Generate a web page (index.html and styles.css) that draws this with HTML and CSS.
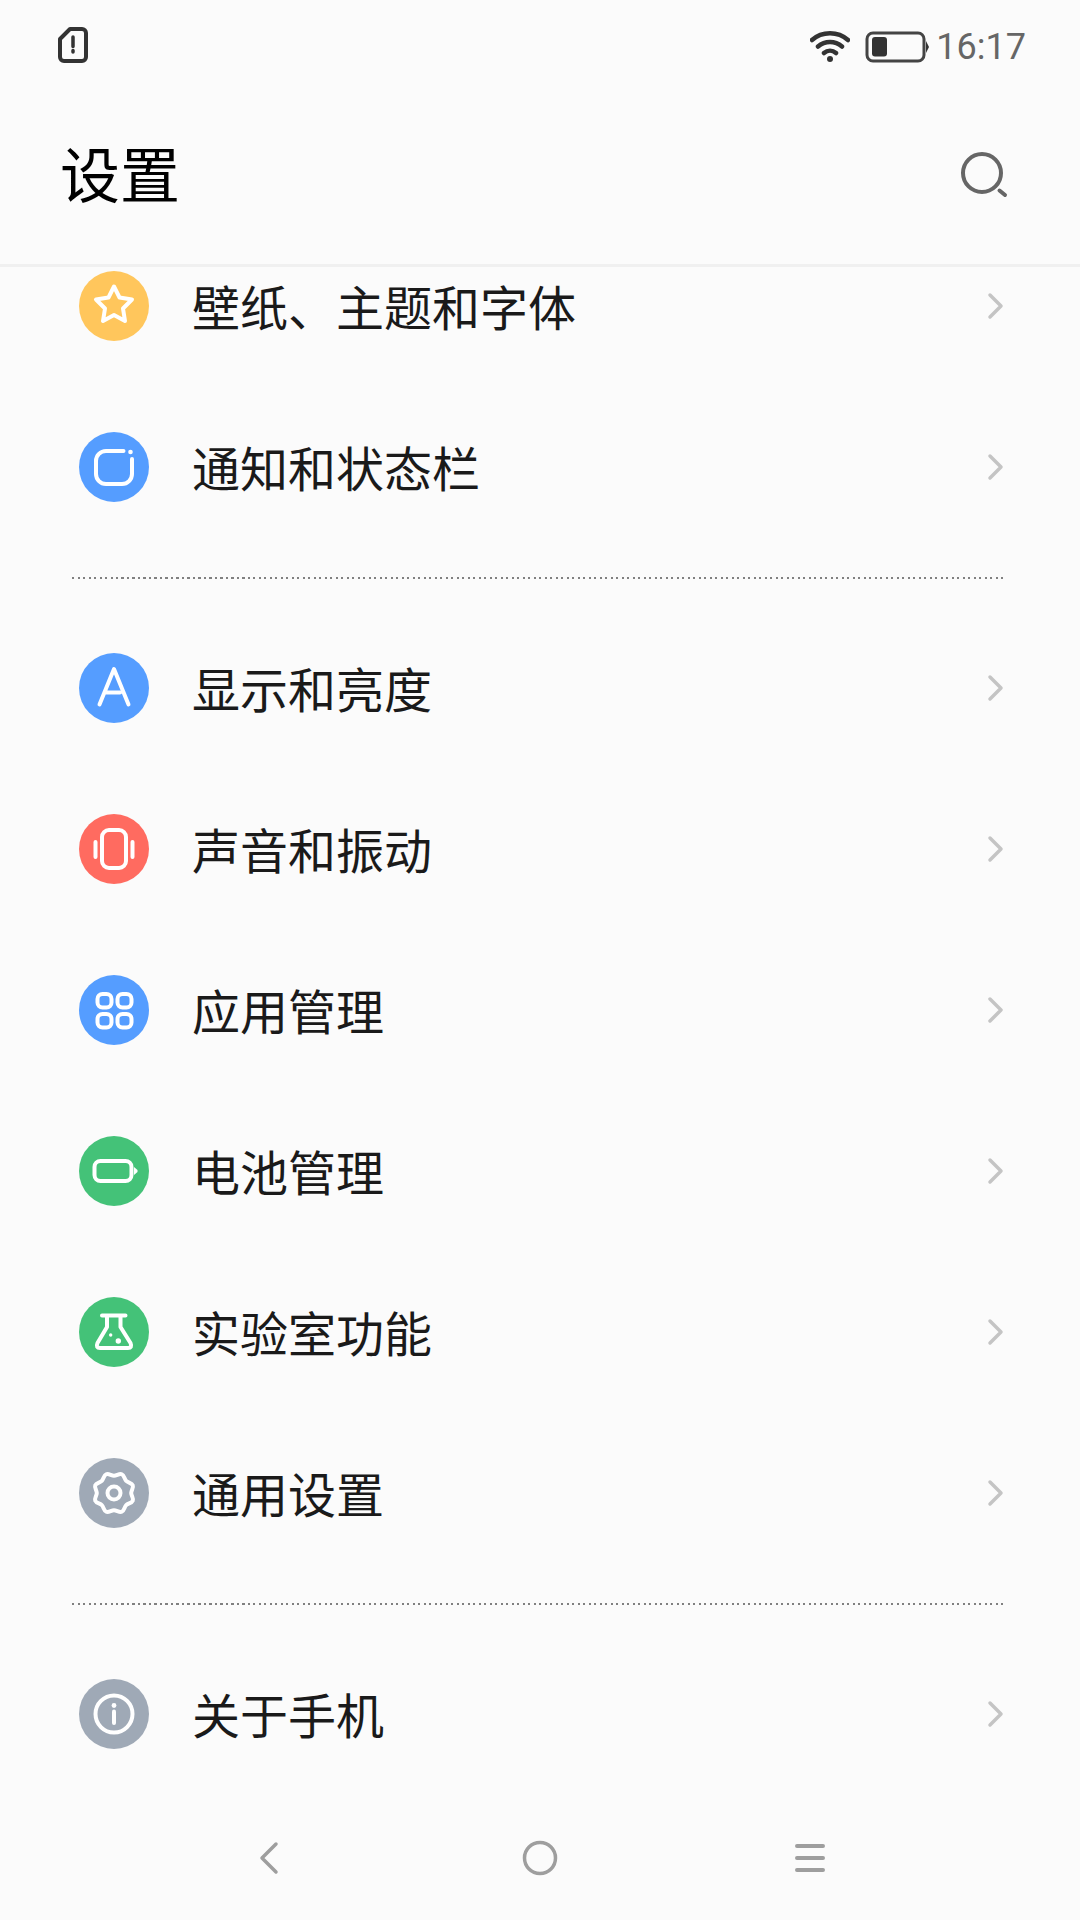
FILE: index.html
```html
<!DOCTYPE html>
<html lang="zh">
<head>
<meta charset="utf-8">
<title>设置</title>
<link rel="stylesheet" href="styles.css">
</head>
<body>
<div class="screen">
  <header class="top">
    <div class="status">
      <svg class="sim" viewBox="0 0 30 36"><path class="st-dark" d="M12 2H24a4 4 0 0 1 4 4V30a4 4 0 0 1-4 4H6a4 4 0 0 1-4-4V12Z"/><path class="st-mark" d="M15 10V19.500M15 23.500V25"/></svg>
      <div class="status-right">
        <svg class="wifi" viewBox="0 0 40 31"><path class="st-wifi" d="M2 9C12 0 28 0 38 9M8 15.500C15 9.500 25 9.500 32 15.500M14 22C17.500 19 22.500 19 26 22"/><circle class="fill-dark" cx="20" cy="28" r="3"/></svg>
        <svg class="batt" viewBox="0 0 64 32"><rect class="st-batt" x="2" y="2" width="57" height="28" rx="6"/><path class="fill-dark" d="M61 10l3 6-3 6z"/><rect class="fill-dark" x="7" y="6" width="15" height="19.500" rx="3"/></svg>
        <span class="time">16:17</span>
      </div>
    </div>
    <div class="titlebar">
      <h1 class="title">设置</h1>
      <svg class="search" viewBox="0 0 50 50"><circle class="st-search" cx="22" cy="21" r="19"/><path class="st-search" d="M39.500 38.500L45 43"/></svg>
    </div>
  </header>

  <main class="content">
    <div class="list">
      <section class="group">
        <div class="row">
          <svg class="ico" viewBox="0 0 70 70"><circle class="bg-yellow" cx="35" cy="35" r="35"/><path class="st-w" d="M35 15.500L40.500 26.500 53 28.500 44 37.500 46 50 35 44 24 50 26 37.500 17 28.500 29.500 26.500Z"/></svg>
          <span class="label">壁纸、主题和字体</span>
          <svg class="chev" viewBox="0 0 18 30"><path d="M3 4L14 15 3 26"/></svg>
        </div>
        <div class="row">
          <svg class="ico" viewBox="0 0 70 70"><circle class="bg-blue" cx="35" cy="35" r="35"/><path class="st-w" d="M44.500 19H27a10 10 0 0 0-10 10V42a10 10 0 0 0 10 10H43a10 10 0 0 0 10-10V27"/><circle class="fill-w" cx="51.500" cy="20" r="2.300"/></svg>
          <span class="label">通知和状态栏</span>
          <svg class="chev" viewBox="0 0 18 30"><path d="M3 4L14 15 3 26"/></svg>
        </div>
      </section>
      <div class="dots"></div>
      <section class="group">
        <div class="row">
          <svg class="ico" viewBox="0 0 70 70"><circle class="bg-blue" cx="35" cy="35" r="35"/><path class="st-w" d="M20.500 51.500L35 16 49.500 51.500M27 39.500H41"/></svg>
          <span class="label">显示和亮度</span>
          <svg class="chev" viewBox="0 0 18 30"><path d="M3 4L14 15 3 26"/></svg>
        </div>
        <div class="row">
          <svg class="ico" viewBox="0 0 70 70"><circle class="bg-red" cx="35" cy="35" r="35"/><rect class="st-w" x="23" y="16" width="24" height="38" rx="7"/><path class="st-w" d="M16.500 28V43M53.500 28V43"/></svg>
          <span class="label">声音和振动</span>
          <svg class="chev" viewBox="0 0 18 30"><path d="M3 4L14 15 3 26"/></svg>
        </div>
        <div class="row">
          <svg class="ico" viewBox="0 0 70 70"><circle class="bg-blue" cx="35" cy="35" r="35"/><rect class="st-w" x="18.500" y="19" width="14" height="13.500" rx="5"/><rect class="st-w" x="38.500" y="19" width="14" height="13.500" rx="5"/><rect class="st-w" x="18.500" y="39" width="14" height="13.500" rx="5"/><rect class="st-w" x="38.500" y="39" width="14" height="13.500" rx="5"/></svg>
          <span class="label">应用管理</span>
          <svg class="chev" viewBox="0 0 18 30"><path d="M3 4L14 15 3 26"/></svg>
        </div>
        <div class="row">
          <svg class="ico" viewBox="0 0 70 70"><circle class="bg-green" cx="35" cy="35" r="35"/><rect class="st-w" x="15.500" y="25" width="37" height="20" rx="6"/><path class="fill-w" d="M55 31L58.500 34V36L55 39Z"/></svg>
          <span class="label">电池管理</span>
          <svg class="chev" viewBox="0 0 18 30"><path d="M3 4L14 15 3 26"/></svg>
        </div>
        <div class="row">
          <svg class="ico" viewBox="0 0 70 70"><circle class="bg-green" cx="35" cy="35" r="35"/><path class="st-w" d="M23 18.500H46.500M28 18.500V30L18.500 46Q16.500 51 21 51H49Q53.500 51 51.500 46L41.500 30V18.500"/><circle class="fill-w" cx="31.700" cy="38" r="1.700"/><circle class="fill-w" cx="39.300" cy="44" r="2.700"/></svg>
          <span class="label">实验室功能</span>
          <svg class="chev" viewBox="0 0 18 30"><path d="M3 4L14 15 3 26"/></svg>
        </div>
        <div class="row">
          <svg class="ico" viewBox="0 0 70 70"><circle class="bg-gray" cx="35" cy="35" r="35"/><path class="st-w" d="M35 17.800C37.600 17.800 40.370 15.240 42.770 16.240S45.320 21 47.160 22.840S52.760 24.830 53.760 27.230S52.200 32.400 52.200 35S54.760 40.370 53.760 42.770S49 45.320 47.160 47.160S45.170 52.760 42.770 53.760S37.600 52.200 35 52.200S29.630 54.760 27.230 53.760S24.680 49 22.840 47.160S17.240 45.170 16.240 42.770S17.800 37.600 17.800 35S15.240 29.630 16.240 27.230S21 24.680 22.840 22.840S24.830 17.240 27.230 16.240S32.400 17.800 35 17.800Z"/><circle class="st-w" cx="35" cy="35" r="6.500"/></svg>
          <span class="label">通用设置</span>
          <svg class="chev" viewBox="0 0 18 30"><path d="M3 4L14 15 3 26"/></svg>
        </div>
      </section>
      <div class="dots"></div>
      <section class="group">
        <div class="row">
          <svg class="ico" viewBox="0 0 70 70"><circle class="bg-gray" cx="35" cy="35" r="35"/><circle class="st-w" cx="35" cy="35" r="18.500"/><path class="st-w" d="M35 32.500V44"/><circle class="fill-w" cx="35" cy="26.500" r="2.400"/></svg>
          <span class="label">关于手机</span>
          <svg class="chev" viewBox="0 0 18 30"><path d="M3 4L14 15 3 26"/></svg>
        </div>
      </section>
    </div>
  </main>

  <nav class="navbar">
    <svg class="nav-back" viewBox="0 0 20 34"><path class="st-nav" d="M17 3L3 17 17 31" /></svg>
    <svg class="nav-home" viewBox="0 0 36 36"><circle class="st-nav" cx="18" cy="18" r="15.500"/></svg>
    <svg class="nav-menu" viewBox="0 0 30 28"><path class="st-nav-m" d="M2 2H28M2 14H28M2 26H28"/></svg>
  </nav>
</div>
</body>
</html>
```
FILE: styles.css
```css
* { box-sizing: border-box; }
html, body { margin: 0; padding: 0; }
body { background: #fbfbfb; font-family: "Noto Sans CJK SC", "Noto Sans", sans-serif; }
.screen { width: 1080px; height: 1920px; display: flex; flex-direction: column; overflow: hidden; background: #fbfbfb; }

.top { height: 267px; flex: none; border-bottom: 3px solid #f0f0f0; position: relative; z-index: 1; background: #fbfbfb; }
.status { height: 90px; padding: 27px 54px 0 58px; display: flex; justify-content: space-between; align-items: flex-start; }
.status-right { display: flex; align-items: center; height: 36px; }
.sim { width: 30px; height: 36px; display: block; }
.wifi { width: 40px; height: 31px; display: block; margin-right: 15px; margin-top: 3px; }
.batt { width: 64px; height: 32px; display: block; margin-right: 7px; margin-top: 3px; }
.time { font-family: Roboto, sans-serif; font-size: 36px; color: #666; line-height: 36px; padding-top: 4px; }
.st-dark { fill: none; stroke: #333; stroke-width: 4; stroke-linejoin: round; }
.st-mark { fill: none; stroke: #333; stroke-width: 3.500; stroke-linecap: round; }
.st-wifi { fill: none; stroke: #333; stroke-width: 4.500; stroke-linecap: round; }
.st-batt { fill: none; stroke: #444; stroke-width: 3; }
.fill-dark { fill: #333; }

.titlebar { height: 174px; padding: 0 70px 0 60px; display: flex; justify-content: space-between; align-items: center; }
.title { margin: 0 0 10px; font-size: 60px; font-weight: 400; color: #000; line-height: 1; }
.search { width: 50px; height: 50px; display: block; }
.st-search { fill: none; stroke: #666; stroke-width: 4; stroke-linecap: round; }

.content { flex: 1; overflow: hidden; }
.list { margin-top: -42px; }
.row { height: 161px; padding: 0 75px 0 79px; display: flex; align-items: center; }
.ico { width: 70px; height: 70px; flex: none; display: block; }
.label { flex: 1; margin-left: 43px; padding-bottom: 2px; font-size: 48px; color: #1a1a1a; line-height: 1; }
.chev { width: 18px; height: 30px; flex: none; display: block; }
.chev path { fill: none; stroke: #c4c4c4; stroke-width: 3.500; stroke-linecap: round; stroke-linejoin: round; }
.dots { height: 60px; display: flex; align-items: center; padding: 1px 74px 0 72px; }
.dots::before { content: ""; flex: 1; height: 2px; background: repeating-linear-gradient(90deg, #808080 0 2px, transparent 2px 5.500px); }

.bg-yellow { fill: #ffc65c; }
.bg-blue { fill: #559dff; }
.bg-red { fill: #ff6b60; }
.bg-green { fill: #44c278; }
.bg-gray { fill: #9fa9b6; }
.st-w { fill: none; stroke: #fff; stroke-width: 4; stroke-linecap: round; stroke-linejoin: round; }
.fill-w { fill: #fff; }

.navbar { height: 120px; flex: none; display: flex; align-items: center; justify-content: space-between; padding: 0 255px 4px 259px; }
.nav-back { width: 20px; height: 34px; display: block; }
.nav-home { width: 36px; height: 36px; display: block; margin-left: 6px; }
.nav-menu { width: 30px; height: 28px; display: block; }
.st-nav { fill: none; stroke: #9e9e9e; stroke-width: 3.500; stroke-linecap: round; stroke-linejoin: round; }
.st-nav-m { fill: none; stroke: #9e9e9e; stroke-width: 4; stroke-linecap: round; }
```
